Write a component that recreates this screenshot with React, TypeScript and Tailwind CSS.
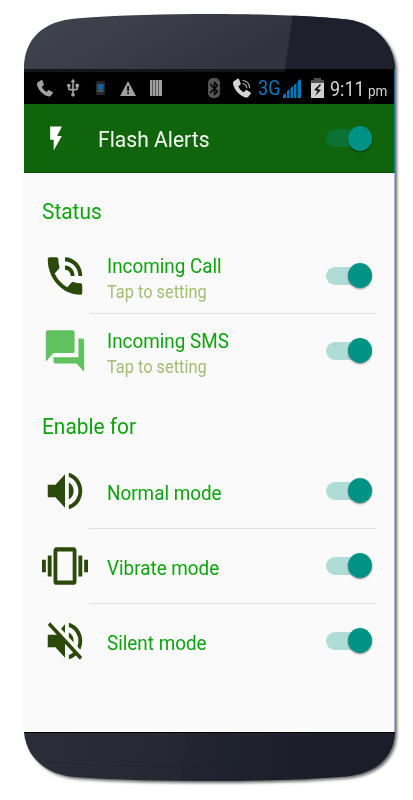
import type { ReactNode } from 'react';
import type { IconType } from 'react-icons';
import {
  MdBluetooth,
  MdFlashOn,
  MdForum,
  MdPhoneInTalk,
  MdUsb,
  MdVibration,
  MdVolumeOff,
  MdVolumeUp,
} from 'react-icons/md';

interface SettingItem {
  title: string;
  subtitle?: string;
  icon: IconType;
  iconClass: string;
}

const statusItems: SettingItem[] = [
  { title: 'Incoming Call', subtitle: 'Tap to setting', icon: MdPhoneInTalk, iconClass: 'text-[#2b490a]' },
  { title: 'Incoming SMS', subtitle: 'Tap to setting', icon: MdForum, iconClass: 'text-[#61c15f]' },
];

const modeItems: SettingItem[] = [
  { title: 'Normal mode', icon: MdVolumeUp, iconClass: 'text-[#2b490a]' },
  { title: 'Vibrate mode', icon: MdVibration, iconClass: 'text-[#2b490a]' },
  { title: 'Silent mode', icon: MdVolumeOff, iconClass: 'text-[#2b490a]' },
];

const HANDSET =
  'M.5 2.500 4 .2C5-.1 5.300.3 5.600 1l1.200 3.200c.2.8 0 1.200-.6 1.600l-1.400 1c.7 2.200 2.700 4.200 5 5.200l1-1.400c.5-.6 1-.6 1.600-.3l3.100 1.700c.6.4.6 1 .2 1.500L13.500 16c-1 .8-2 .5-3.500 0C5 14 1 9.500 0 4.500 0 3.500 0 3 .5 2.500Z';

const Switch = ({ dark = false }: { dark?: boolean }) => (
  <div className="flex h-[25px] w-[46px] shrink-0 items-center">
    <div className={`h-[18px] w-9 shrink-0 rounded-full ${dark ? 'bg-[#0c7233]' : 'bg-[#b0dcd8]'}`} />
    <div className="-ml-[14px] h-[25px] w-6 shrink-0 rounded-[50%] bg-[#009385] shadow-[0_1px_2px_rgba(0,0,0,0.45)]" />
  </div>
);

const SectionTitle = ({ children }: { children: ReactNode }) => (
  <h2 className="ml-[18px] origin-left scale-x-[0.92] whitespace-nowrap text-[22.7px] leading-[26px] text-[#0fa30f]">
    {children}
  </h2>
);

const SettingRow = ({ item, last }: { item: SettingItem; last: boolean }) => {
  const Icon = item.icon;

  return (
    <div className="flex h-[75px] pl-[18px]">
      <Icon preserveAspectRatio="none" className={`mr-px mt-3 h-[50px] w-[46px] shrink-0 ${item.iconClass}`} />
      <div className={`mr-[18px] flex flex-1 border-b pl-[18px] ${last ? 'border-transparent' : 'border-[#e2e2e2]'}`}>
        <div className={`flex-1 ${item.subtitle ? 'pt-[14px]' : 'pt-[26px]'}`}>
          <p className="origin-left scale-x-[0.92] whitespace-nowrap text-[20.5px] leading-[26px] text-[#0fa30f]">
            {item.title}
          </p>
          {item.subtitle && (
            <p className="mt-px origin-left scale-x-[0.935] whitespace-nowrap text-[17.5px] leading-6 text-[#a2bc71]">
              {item.subtitle}
            </p>
          )}
        </div>
        <div className="mr-1 mt-6">
          <Switch />
        </div>
      </div>
    </div>
  );
};

const StatusBar = () => (
  <div className="flex h-[35px] items-center bg-black pl-[13px] pt-[3px] text-[#a0a0a0]">
    <svg viewBox="0 0 16 17" className="h-[17px] w-4" fill="currentColor">
      <path d={HANDSET} />
    </svg>
    <MdUsb className="ml-[10px] h-5 w-5" />
    <svg viewBox="0 0 9 14" className="ml-[13px] h-[14px] w-[9px]">
      <rect width="9" height="14" rx="1.5" fill="#292724" />
      <rect x="1.5" y="3" width="6" height="5.500" fill="#1261a7" />
      <rect x="1.5" y="8.500" width="6" height="2.500" fill="#3d5a75" />
    </svg>
    <svg viewBox="0 0 16 15" className="ml-[15px] h-[15px] w-4">
      <path d="M8 0 16 15H0Z" fill="currentColor" />
      <path d="M7.200 5h1.800v5H7.200zM7.200 11.200h1.800V13H7.200z" fill="#000" />
    </svg>
    <svg viewBox="0 0 12 16" className="ml-[14px] h-4 w-3" fill="currentColor">
      <rect width="12" height="16" fill="#555" />
      <path d="M0 0h2v16H0zM3 0h2v16H3zM6 0h2v16H6zM9 0h3v16H9z" />
    </svg>
    <span className="ml-[46px] flex h-[20px] w-3 items-center justify-center rounded-[5px] bg-[#555]">
      <MdBluetooth className="h-[17px] w-[17px] shrink-0 text-black" />
    </span>
    <svg viewBox="0 0 19 20" className="ml-[13px] h-5 w-[19px]">
      <path d={HANDSET} transform="translate(0 .5) scale(1.12 1.15)" fill="#d4d4d4" />
      <g fill="none" stroke="#b5b5b5" strokeWidth="1.1">
        <path d="M9.500 5.500c2.500.3 4 2 4.300 4.700" />
        <path d="M9.500 2.500c4.300.4 7 3.300 7.200 7.700" />
      </g>
    </svg>
    <span className="ml-[6px] w-[22px] text-[21px] leading-5 text-[#0878b6]">
      <span className="block origin-left scale-x-[0.86]">3G</span>
    </span>
    <svg viewBox="0 0 18 19" className="ml-[3px] h-[19px] w-[18px]" fill="#0878b6">
      <path d="M0 19v-3l3-2v5zM4 19v-7l2.500-2v9zM7.500 19V9L10 7v12zM11 19V6l2.500-2v15zM14.500 19V2L18 0v19z" />
    </svg>
    <svg viewBox="0 0 13 20" className="ml-[10px] h-5 w-[13px]">
      <path d="M3 0h7v2h3v4H0V2h3z" fill="#505050" />
      <path d="M0 5h13v15H0z" fill="#d0d0d0" />
      <path d="M9 6 3 12l3.500 1-2.500 5 6-6-3.500-1L10 7z" fill="#111" />
    </svg>
    <span className="ml-[6px] mt-[3px] flex items-baseline text-[#d2d2d2]">
      <span className="w-[33px] text-[20px] leading-5">
        <span className="block origin-left scale-x-[0.9] whitespace-nowrap">9:11</span>
      </span>
      <span className="ml-[5px] w-5 text-[15px] leading-5">
        <span className="block origin-left scale-x-[0.9]">pm</span>
      </span>
    </span>
  </div>
);

const TopBezel = () => (
  <svg viewBox="0 0 371 55" className="block h-[55px] w-full">
    <defs>
      <linearGradient id="top-glass" x1="0" y1="0" x2="1" y2="0.25">
        <stop offset="0" stopColor="#40444f" />
        <stop offset="0.35" stopColor="#3b3e49" />
        <stop offset="0.75" stopColor="#31333f" />
      </linearGradient>
      <clipPath id="top-outline">
        <path d="M0 55C0 24 20 7 52 4.500 96 1 145 0 187 0 235 0 289 2 323 5.500 352 9 371 31 371 55Z" />
      </clipPath>
    </defs>
    <g clipPath="url(#top-outline)">
      <rect width="371" height="55" fill="url(#top-glass)" />
      <path d="M269 0h102v55H261z" fill="#1e202d" />
    </g>
  </svg>
);

const BottomBezel = () => (
  <svg viewBox="0 0 371 49" className="block h-[49px] w-full">
    <defs>
      <linearGradient id="bottom-glass" gradientUnits="userSpaceOnUse" x1="0" y1="0" x2="371" y2="45">
        <stop offset="0" stopColor="#2b2e39" />
        <stop offset="0.42" stopColor="#252833" />
        <stop offset="0.8" stopColor="#1b1d29" />
      </linearGradient>
    </defs>
    <path
      d="M0 0H371C370 25 353 41 323 44.500 285 47.500 236 49 187 49 140 49 90 48 50 45 20 42 2 24 0 0Z"
      fill="url(#bottom-glass)"
    />
    <path d="M163 0h120v48H157z" fill="#1c1e2a" fillOpacity="0.25" />
    <path d="M0 0h371v1H0z" fill="#000" />
    <path d="M22 30c75 6 212 7 293-1 13-3 20-13 23-28" fill="none" stroke="#1d202a" strokeWidth="0.4" />
  </svg>
);

const App = () => (
  <div className="h-[800px] w-[413px] overflow-hidden bg-white pl-6 pt-[14px] font-['Roboto',sans-serif]">
    <div className="w-[371px] drop-shadow-[2px_2px_1.5px_rgba(0,0,0,0.6)]">
      <TopBezel />
      <main>
        <div className="border-r border-[#14708f] bg-black">
          <div className="h-[35px]">
            <StatusBar />
            <div className="relative -mt-[35px] h-[3px] w-[261px] bg-[#161616]" />
          </div>
        </div>

        <header className="flex h-[69px] items-center border-b border-r border-b-[#0a4d08] border-r-[#1d7a8a] bg-[#10640c] pl-[18px] pr-[22px]">
          <MdFlashOn preserveAspectRatio="none" className="mt-px h-[29px] w-7 text-white" />
          <h1 className="ml-7 mt-[3px] flex-1 origin-left scale-x-[0.93] whitespace-nowrap text-[22.7px] leading-7 text-[#f2f7f2]">
            Flash Alerts
          </h1>
          <Switch dark />
        </header>

        <div className="h-[559px] border-r border-[#9dbcda] bg-[#fafafa] pt-[26px]">
          <SectionTitle>Status</SectionTitle>
          <div className="mt-[14px]">
            {statusItems.map((item, index) => (
              <SettingRow key={item.title} item={item} last={index === statusItems.length - 1} />
            ))}
          </div>
          <div className="mt-[25px]">
            <SectionTitle>Enable for</SectionTitle>
          </div>
          <div className="mt-[14px]">
            {modeItems.map((item, index) => (
              <SettingRow key={item.title} item={item} last={index === modeItems.length - 1} />
            ))}
          </div>
        </div>
      </main>
      <BottomBezel />
    </div>
  </div>
);

export default App;
